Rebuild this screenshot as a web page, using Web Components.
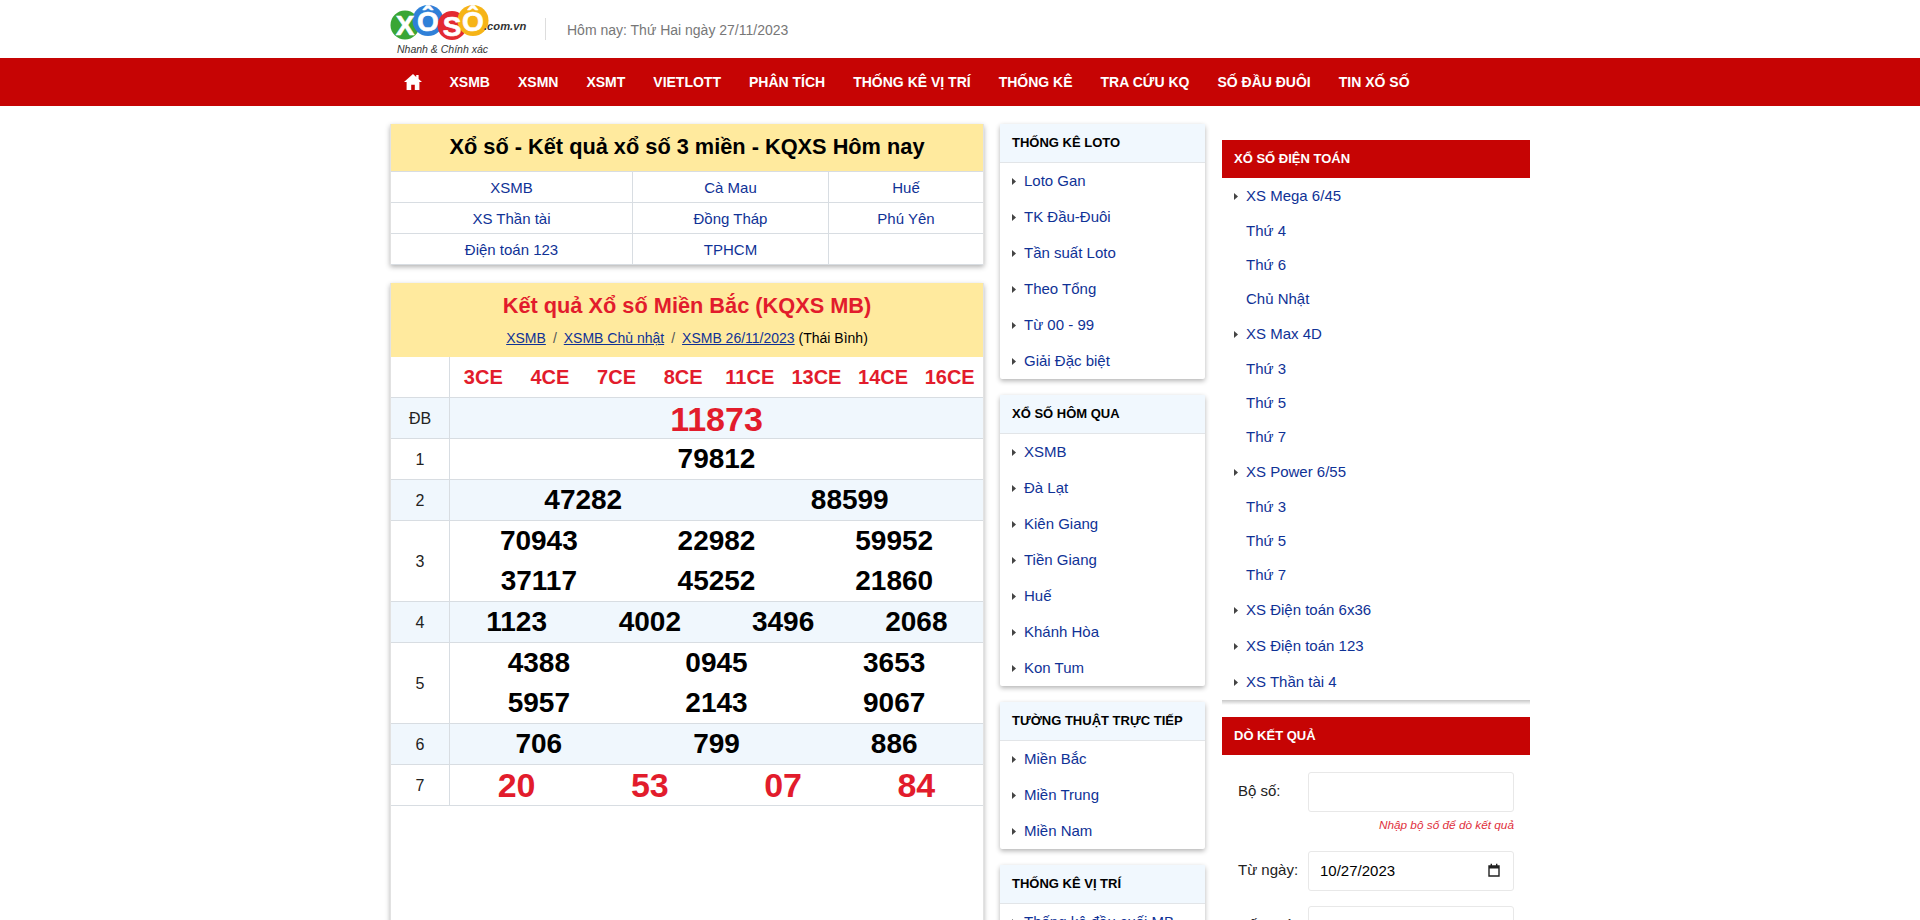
<!DOCTYPE html>
<html><head><meta charset="utf-8"><style>
html,body{margin:0;padding:0;height:920px;overflow:hidden;background:#fff;font-family:"Liberation Sans",Arial,sans-serif}
</style></head><body>
<site-header></site-header>
<site-nav></site-nav>
<page-main></page-main>
<script>
const def=(name,html)=>customElements.define(name,class extends HTMLElement{constructor(){super();this.attachShadow({mode:'open'}).innerHTML=typeof html==='function'?html(this):html;}});
const BLUE='#0f3296',RED='#e21c2c',LINE='#d8dde2',YEL='#ffea9e';
def('xo-logo',`<style>:host{display:block;width:140px;height:58px}svg{display:block}text{font-family:"Liberation Sans",sans-serif}</style>
<svg width="140" height="58" viewBox="0 0 140 58">
<circle cx="15" cy="25" r="14.5" fill="#3aa635"/><circle cx="38" cy="20.500" r="15.500" fill="#2f80d8"/><circle cx="62" cy="25.500" r="14.500" fill="#e32a32"/><circle cx="83" cy="20.500" r="15.500" fill="#f6b417"/>
<g font-size="28" font-weight="700" fill="#fff" stroke="#fff" stroke-width=".6" text-anchor="middle"><text x="15" y="35">X</text><text x="38" y="31">Ô</text><text x="62" y="35.500">S</text><text x="83" y="31">Ô</text></g>
<text x="94" y="29.500" font-size="11.200" font-weight="700" font-style="italic" fill="#333">.com.vn</text>
<text x="7" y="53" font-size="10.500" font-style="italic" fill="#333">Nhanh &amp; Chính xác</text>
</svg>`);
def('site-header',`<style>:host{display:block;height:58px}.w{width:1140px;margin:0 auto;display:flex;align-items:center;height:58px}
.d{margin-left:15px;border-left:1px solid #ddd;height:22px;padding-left:21px;color:#777;font-size:14px;line-height:24px;white-space:nowrap}</style>
<div class="w"><xo-logo></xo-logo><div class="d">Hôm nay: Thứ Hai ngày 27/11/2023</div></div>`);
const navs=['XSMB','XSMN','XSMT','VIETLOTT','PHÂN TÍCH','THỐNG KÊ VỊ TRÍ','THỐNG KÊ','TRA CỨU KQ','SỐ ĐẦU ĐUÔI','TIN XỐ SỐ'];
def('site-nav',`<style>:host{display:block;background:#c60404;height:48px}.w{width:1140px;margin:0 auto;display:flex;align-items:center;height:48px;color:#fff;font-weight:700;font-size:14px}
svg{display:block;margin:0 13.500px 0 14px}span{padding:0 14px;white-space:nowrap}</style>
<div class="w"><svg width="18" height="16" viewBox="0 0 18 16"><path fill="#fff" d="M9 0 0 8h2.600v8h4.600v-5.200h3.600V16h4.600V8H18l-3.400-3V1h-2.400v1.900z"/></svg>${navs.map(n=>`<span>${n}</span>`).join('')}</div>`);
def('quick-links',`<style>:host{display:block;box-shadow:0 2px 5px rgba(0,0,0,.3);margin-bottom:18px;border:solid #e2e2e2;border-width:0 1px;box-sizing:border-box}
h1{margin:0;background:${YEL};font-size:21.760px;line-height:46px;height:47px;text-align:center;color:#000;font-weight:700;border-bottom:1px solid ${LINE}}
.g{display:grid;grid-template-columns:242px 196px 1fr}
.g div{height:30px;line-height:31px;text-align:center;font-size:15px;color:${BLUE};border-bottom:1px solid ${LINE};border-right:1px solid ${LINE}}
.g div:nth-child(3n){border-right:0}</style>
<h1>Xổ số - Kết quả xổ số 3 miền - KQXS Hôm nay</h1>
<div class="g"><div>XSMB</div><div>Cà Mau</div><div>Huế</div><div>XS Thần tài</div><div>Đồng Tháp</div><div>Phú Yên</div><div>Điện toán 123</div><div>TPHCM</div><div></div></div>`);
const row=(label,cls,lines,alt)=>`<div class="r ${alt?'alt':''}"><div class="l">${label}</div><div class="v">${lines.map(l=>`<div class="ln ${cls}">${l.map(x=>`<b>${x}</b>`).join('')}</div>`).join('')}</div></div>`;
def('result-card',`<style>:host{display:block;box-shadow:0 2px 5px rgba(0,0,0,.3);height:900px;border:solid #e2e2e2;border-width:0 1px;box-sizing:border-box}
.h{background:${YEL};height:74px;text-align:center}
h2{margin:0;padding-top:8px;color:${RED};font-size:21.760px;line-height:30px;font-weight:700}
.c{font-size:14px;line-height:20px;margin-top:7px;color:#000}.c a{color:${BLUE};text-decoration:underline}.c i{font-style:normal;color:#555;margin:0 7px}
.r{display:flex;border-bottom:1px solid ${LINE}}.l{width:58px;flex:none;border-right:1px solid ${LINE};display:flex;align-items:center;justify-content:center;font-size:16px;color:#222;padding-top:2px;box-sizing:content-box}
.v{flex:1}.ln{display:flex;height:40px;align-items:center}.ln b{flex:1;text-align:center;font-size:28px;line-height:40px;color:#000}
.alt{background:#f0f7fd}.ce b{font-size:20px;color:${RED}}.big b{font-size:34px;color:${RED}}.alt .big b{padding-top:2px}</style>
<div class="h"><h2>Kết quả Xổ số Miền Bắc (KQXS MB)</h2><div class="c"><a>XSMB</a><i>/</i><a>XSMB Chủ nhật</a><i>/</i><a>XSMB 26/11/2023</a> (Thái Bình)</div></div>
${row('','ce',[['3CE','4CE','7CE','8CE','11CE','13CE','14CE','16CE']])}
${row('ĐB','big',[['11873']],1)}
${row('1','',[['79812']])}
${row('2','',[['47282','88599']],1)}
${row('3','',[['70943','22982','59952'],['37117','45252','21860']])}
${row('4','',[['1123','4002','3496','2068']],1)}
${row('5','',[['4388','0945','3653'],['5957','2143','9067']])}
${row('6','',[['706','799','886']],1)}
${row('7','big',[['20','53','07','84']])}`);
const arrow=`<svg width="4" height="7" viewBox="0 0 4 7"><path d="M0 0l4 3.500-4 3.500z" fill="#444"/></svg>`;
def('side-panel',h=>`<style>:host{display:block;box-shadow:0 2px 5px rgba(0,0,0,.3);margin-bottom:16px;background:#fff;border-radius:2px}
.h{background:#f1f8fe;height:38px;line-height:38px;padding:0 12px;font-size:13px;font-weight:700;color:#000;border-bottom:1px solid #e2e5e8;white-space:nowrap}
.i{height:34px;padding:0 0 2px 12px;display:flex;align-items:center;font-size:15px;color:${BLUE};white-space:nowrap}svg{margin-right:8px;flex:none;position:relative;top:1px}</style>
<div class="h">${h.getAttribute('title')}</div>${h.getAttribute('items').split('|').map(t=>`<div class="i">${arrow}${t}</div>`).join('')}`);
const rightItems=[['XS Mega 6/45',1],['Thứ 4'],['Thứ 6'],['Chủ Nhật'],['XS Max 4D',1],['Thứ 3'],['Thứ 5'],['Thứ 7'],['XS Power 6/55',1],['Thứ 3'],['Thứ 5'],['Thứ 7'],['XS Điện toán 6x36',1],['XS Điện toán 123',1],['XS Thần tài 4',1]];
def('right-menu',`<style>:host{display:block;margin-top:16px}
.t{background:#c60404;color:#fff;font-weight:700;font-size:13px;height:38px;line-height:38px;padding:0 12px}
.i{display:flex;align-items:center;font-size:15px;color:${BLUE};padding-left:24px;padding-bottom:1px;box-sizing:border-box;height:34px;position:relative}.p{height:36px}
.p svg{position:absolute;left:12px;top:15px}
.sh{height:5px;margin-bottom:-5px;background:linear-gradient(rgba(0,0,0,.22),rgba(0,0,0,0))}</style>
<div class="t">XỔ SỐ ĐIỆN TOÁN</div>${rightItems.map(([t,p])=>`<div class="i ${p?'p':''}">${p?arrow:''}${t}</div>`).join('')}<div class="sh"></div>`);
def('check-form',`<style>:host{display:block;margin-top:17px}
.t{background:#c60404;color:#fff;font-weight:700;font-size:13px;height:38px;line-height:38px;padding:0 12px}
.f{display:grid;grid-template-columns:70px 206px;padding:17px 0 0 16px;align-items:center;font-size:15px;color:#222}
span{margin-bottom:3px}
.b{box-sizing:border-box;height:40px;border:1px solid #e8e8e8;border-radius:3px;padding:0 13px 2px 11px;display:flex;align-items:center;justify-content:space-between;color:#000;font-size:15px}
.e{grid-column:2;text-align:right;color:#e0303c;font-style:italic;font-size:11.800px;height:27px;line-height:26px;white-space:nowrap}.s{height:12px;grid-column:1/3}.g{height:15px;grid-column:1/3}</style>
<div class="t">DÒ KẾT QUẢ</div><div class="f"><span>Bộ số:</span><div class="b"></div><div class="e">Nhập bộ số để dò kết quả</div><div class="s"></div>
<span>Từ ngày:</span><div class="b">10/27/2023<svg width="12" height="14" viewBox="0 0 12 14"><path fill="none" stroke="#222" stroke-width="1.400" d="M1 3h10v10H1z"/><path fill="#222" d="M1 3h10v2.600H1zM2.600.8h1.400V3H2.600zM8 .8h1.400V3H8z"/></svg></div><div class="g"></div>
<span>Đến ngày:</span><div class="b">11/27/2023</div></div>`);
def('page-main',`<style>:host{display:block}.w{width:1140px;margin:0 auto;display:flex;align-items:flex-start;padding-top:18px}
.a{width:594px;flex:none}.b{width:205px;margin-left:16px;flex:none}.c{width:308px;margin-left:17px;flex:none}</style>
<div class="w"><div class="a"><quick-links></quick-links><result-card></result-card></div>
<div class="b"><side-panel title="THỐNG KÊ LOTO" items="Loto Gan|TK Đầu-Đuôi|Tần suất Loto|Theo Tổng|Từ 00 - 99|Giải Đặc biệt"></side-panel>
<side-panel title="XỔ SỐ HÔM QUA" items="XSMB|Đà Lạt|Kiên Giang|Tiền Giang|Huế|Khánh Hòa|Kon Tum"></side-panel>
<side-panel title="TƯỜNG THUẬT TRỰC TIẾP" items="Miền Bắc|Miền Trung|Miền Nam"></side-panel>
<side-panel title="THỐNG KÊ VỊ TRÍ" items="Thống kê đầu cuối MB|Thống kê vị trí"></side-panel></div>
<div class="c"><right-menu></right-menu><check-form></check-form></div></div>`);
</script></body></html>
